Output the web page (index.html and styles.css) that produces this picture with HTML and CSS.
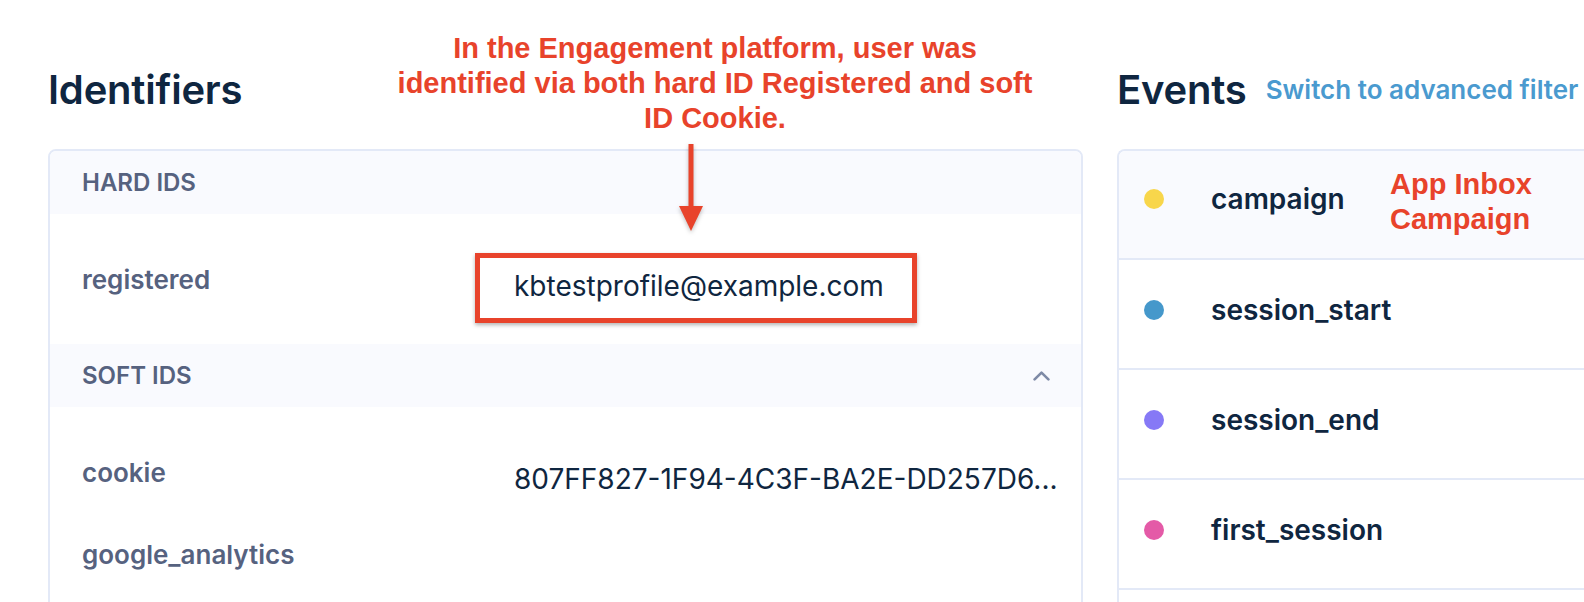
FILE: index.html
```html
<!DOCTYPE html>
<html lang="en">
<head>
<meta charset="utf-8">
<title>Customer profile – Identifiers and Events</title>
<link rel="stylesheet" href="styles.css">
</head>
<body>
<div class="page">
  <section class="col col-left">
    <header class="col-head">
      <h2 class="title">Identifiers</h2>
    </header>
    <div class="card">
      <div class="band"><span class="band-label">HARD IDS</span></div>
      <div class="id-list id-list-hard">
        <div class="id-row">
          <span class="id-key">registered</span>
          <span class="id-val">kbtestprofile@example.com</span>
        </div>
      </div>
      <div class="band">
        <span class="band-label">SOFT IDS</span>
        <svg class="chevron" width="17" height="10" viewBox="0 0 17 10" aria-hidden="true"><polyline points="1.6,8.4 8.5,1.6 15.4,8.4" fill="none" stroke="#7e8aa6" stroke-width="2.6" stroke-linecap="round" stroke-linejoin="round"/></svg>
      </div>
      <div class="id-list">
        <div class="id-row">
          <span class="id-key">cookie</span>
          <span class="id-val">807FF827-1F94-4C3F-BA2E-DD257D6...</span>
        </div>
        <div class="id-row">
          <span class="id-key">google_analytics</span>
          <span class="id-val"></span>
        </div>
      </div>
    </div>
  </section>

  <section class="col col-right">
    <header class="col-head">
      <h2 class="title">Events</h2>
      <a class="link" href="#">Switch to advanced filter</a>
    </header>
    <div class="card card-events">
      <div class="ev-row ev-row-active"><span class="dot dot-yellow"></span><span class="ev-name">campaign</span></div>
      <div class="ev-row"><span class="dot dot-blue"></span><span class="ev-name">session_start</span></div>
      <div class="ev-row"><span class="dot dot-purple"></span><span class="ev-name">session_end</span></div>
      <div class="ev-row"><span class="dot dot-pink"></span><span class="ev-name">first_session</span></div>
      <div class="ev-row"><span class="dot dot-blue"></span></div>
    </div>
  </section>
</div>

<p class="note note-top">In the Engagement platform, user was<br>identified via both hard ID Registered and soft<br>ID Cookie.</p>
<svg class="note-arrow" width="26" height="90" viewBox="0 0 26 90" aria-hidden="true">
  <line x1="13" y1="0" x2="13" y2="64" stroke="#e8432b" stroke-width="5"/>
  <polygon points="1,62 25,62 13,87" fill="#e8432b"/>
</svg>
<div class="note-box"></div>
<p class="note note-side">App Inbox<br>Campaign</p>
</body>
</html>
```
FILE: styles.css
```css
html, body {
  margin: 0;
  padding: 0;
  background: #ffffff;
}
body {
  font-family: Inter, "Noto Sans", sans-serif;
  color: #0f2640;
  overflow: hidden;
  position: relative;
  width: 1584px;
  height: 602px;
}
.page {
  display: flex;
  gap: 34px;
  padding-left: 48px;
}
.col-left {
  flex: 0 0 1035px;
  min-width: 0;
}
.col-right {
  flex: 0 0 560px;
  min-width: 0;
}
.col-head {
  display: flex;
  align-items: center;
  gap: 19px;
  height: 48px;
  margin: 66px 0 35px;
}
.title {
  margin: 0;
  font-size: 40px;
  line-height: 48px;
  font-weight: 600;
  color: #0f2640;
  letter-spacing: -0.2px;
}
.link {
  font-size: 26px;
  line-height: 32px;
  font-weight: 600;
  color: #4a9acf;
  text-decoration: none;
  white-space: nowrap;
}
.card {
  border: 2px solid #e3e9f7;
  border-radius: 8px;
  overflow: hidden;
  background: #ffffff;
}
.band {
  display: flex;
  align-items: center;
  justify-content: space-between;
  height: 63px;
  padding: 0 31px 0 32px;
  background: #f9fafe;
}
.band-label {
  font-size: 24px;
  line-height: 30px;
  font-weight: 600;
  color: #56627f;
}
.chevron {
  display: block;
}
.id-list {
  display: flex;
  flex-direction: column;
  gap: 43px;
  padding: 50px 16px 41px 32px;
}
.id-row {
  display: flex;
  align-items: flex-start;
  min-height: 39px;
}
.id-key {
  flex: 0 0 432px;
  font-size: 26px;
  line-height: 32px;
  font-weight: 600;
  color: #56627f;
}
.id-val {
  flex: 1;
  min-width: 0;
  margin-top: 5px;
  font-size: 28px;
  line-height: 34px;
  font-weight: 400;
  color: #0f2640;
  white-space: nowrap;
  overflow: hidden;
  text-overflow: ellipsis;
}
.card-events {
  border-right: none;
  border-radius: 8px 0 0 8px;
}
.ev-row {
  display: flex;
  align-items: center;
  gap: 47px;
  box-sizing: border-box;
  height: 110px;
  padding: 0 0 8px 25px;
  border-bottom: 2px solid #e3e9f7;
}
.ev-row-active {
  height: 109px;
  padding-bottom: 11px;
  background: #f9fafe;
}
.dot {
  flex: 0 0 20px;
  width: 20px;
  height: 20px;
  border-radius: 50%;
}
.dot-yellow { background: #f8d64b; }
.dot-blue { background: #4598cb; }
.dot-purple { background: #8679f6; }
.dot-pink { background: #e45aa7; }
.ev-name {
  font-size: 28px;
  line-height: 32px;
  font-weight: 600;
  color: #0f2640;
}

/* annotation overlays */
.note {
  position: absolute;
  margin: 0;
  font-family: "Liberation Sans", Arial, sans-serif;
  font-weight: 700;
  font-size: 29px;
  line-height: 35px;
  color: #e8432b;
}
.note-top {
  left: 385px;
  top: 31px;
  width: 660px;
  text-align: center;
}
.note-side {
  left: 1390px;
  top: 167px;
}
.note-arrow {
  position: absolute;
  left: 678px;
  top: 144px;
  filter: drop-shadow(0 2px 2px rgba(0, 0, 0, 0.25));
}
.note-box {
  position: absolute;
  left: 475px;
  top: 253px;
  width: 432px;
  height: 60px;
  border: 5px solid #e8432b;
  box-shadow: 0 2px 4px rgba(0, 0, 0, 0.3);
}
```
